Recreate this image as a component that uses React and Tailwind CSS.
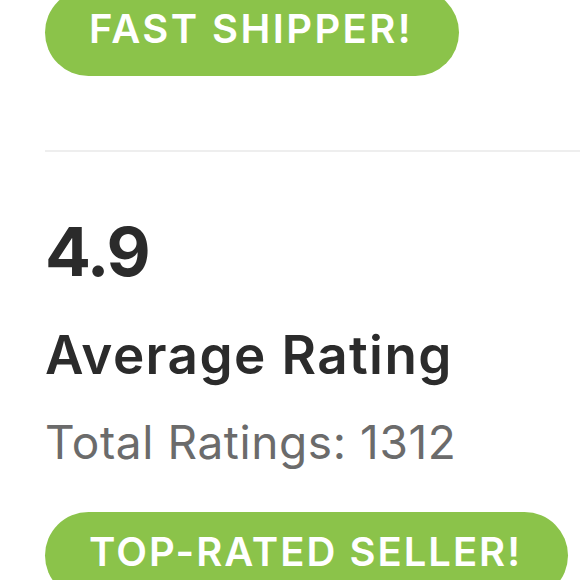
export default function App() {
    return (
        <div className="w-[580px] h-[580px] overflow-hidden bg-white font-['Inter',sans-serif]">
            <div className="pl-[45px]">
                {/* Fast shipper badge */}
                <div className="-mt-[11px] inline-flex rounded-full bg-[#8bc34a] pl-[44px] pr-[46px] pt-[20px] pb-[27px] text-[40px] leading-[40px] font-semibold tracking-[2.4px] text-white">
                    FAST SHIPPER!
                </div>

                <div className="mt-[74px] h-[2px] bg-[#eeeeee]" />

                {/* Rating */}
                <div className="mt-[64px] text-[68px] leading-[70px] font-bold tracking-[-2px] text-[#2b2b2b]">
                    4.9
                </div>
                <div className="mt-[43px] text-[53px] leading-[53px] font-semibold tracking-[1.4px] text-[#2b2b2b]">
                    Average Rating
                </div>
                <div className="mt-[37px] text-[46px] leading-[46px] font-normal tracking-[0.6px] text-[#6b6b6b]">
                    Total Ratings: 1312
                </div>

                <div className="mt-[47px] inline-flex rounded-full bg-[#8bc34a] pl-[44px] pr-[46px] pt-[20px] pb-[27px] text-[40px] leading-[40px] font-semibold tracking-[2px] text-white whitespace-nowrap">
                    TOP-RATED SELLER!
                </div>
            </div>
        </div>
    );
}
